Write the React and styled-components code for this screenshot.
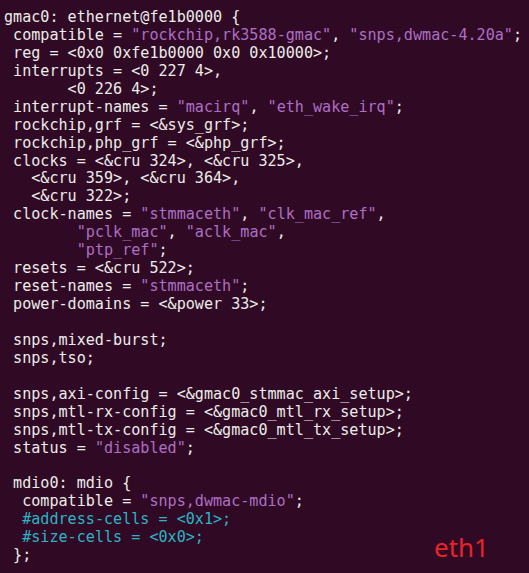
import React from 'react';
import styled, { createGlobalStyle } from 'styled-components';

const Global = createGlobalStyle`
  html, body { margin: 0; padding: 0; background: #300a24; }
  #root { width: 529px; height: 573px; }
`;

const Screen = styled.div`
  position: relative;
  width: 529px;
  height: 573px;
  overflow: hidden;
  background: #300a24;
  padding: 9px 0 0 4px;
  box-sizing: border-box;
`;

const Code = styled.pre`
  margin: 0;
  font-family: "DejaVu Sans Mono", "Liberation Mono", monospace;
  font-size: 15.1px;
  line-height: 17.93px;
  color: #ececea;
  white-space: pre;
`;

const Str = styled.span`
  color: #ad6fc4;
`;

const Cell = styled.span`
  color: #2db3c6;
`;

const Tag = styled.div`
  position: absolute;
  left: 434px;
  top: 529px;
  font-family: "Noto Sans", "Open Sans", sans-serif;
  font-size: 26px;
  color: #e8232b;
`;

const App = () => {
  return (
    <>
      <Global />
      <Screen>
        <Code>
{`gmac0: ethernet@fe1b0000 {
 compatible = `}<Str>"rockchip,rk3588-gmac"</Str>{`, `}<Str>"snps,dwmac-4.20a"</Str>{`;
 reg = <0x0 0xfe1b0000 0x0 0x10000>;
 interrupts = <0 227 4>,
       <0 226 4>;
 interrupt-names = `}<Str>"macirq"</Str>{`, `}<Str>"eth_wake_irq"</Str>{`;
 rockchip,grf = <&sys_grf>;
 rockchip,php_grf = <&php_grf>;
 clocks = <&cru 324>, <&cru 325>,
   <&cru 359>, <&cru 364>,
   <&cru 322>;
 clock-names = `}<Str>"stmmaceth"</Str>{`, `}<Str>"clk_mac_ref"</Str>{`,
        `}<Str>"pclk_mac"</Str>{`, `}<Str>"aclk_mac"</Str>{`,
        `}<Str>"ptp_ref"</Str>{`;
 resets = <&cru 522>;
 reset-names = `}<Str>"stmmaceth"</Str>{`;
 power-domains = <&power 33>;

 snps,mixed-burst;
 snps,tso;

 snps,axi-config = <&gmac0_stmmac_axi_setup>;
 snps,mtl-rx-config = <&gmac0_mtl_rx_setup>;
 snps,mtl-tx-config = <&gmac0_mtl_tx_setup>;
 status = `}<Str>"disabled"</Str>{`;

 mdio0: mdio {
  compatible = `}<Str>"snps,dwmac-mdio"</Str>{`;
  `}<Cell>{`#address-cells = <0x1>;`}</Cell>{`
  `}<Cell>{`#size-cells = <0x0>;`}</Cell>{`
 };`}
        </Code>
        <Tag>eth1</Tag>
      </Screen>
    </>
  );
};

export default App;
